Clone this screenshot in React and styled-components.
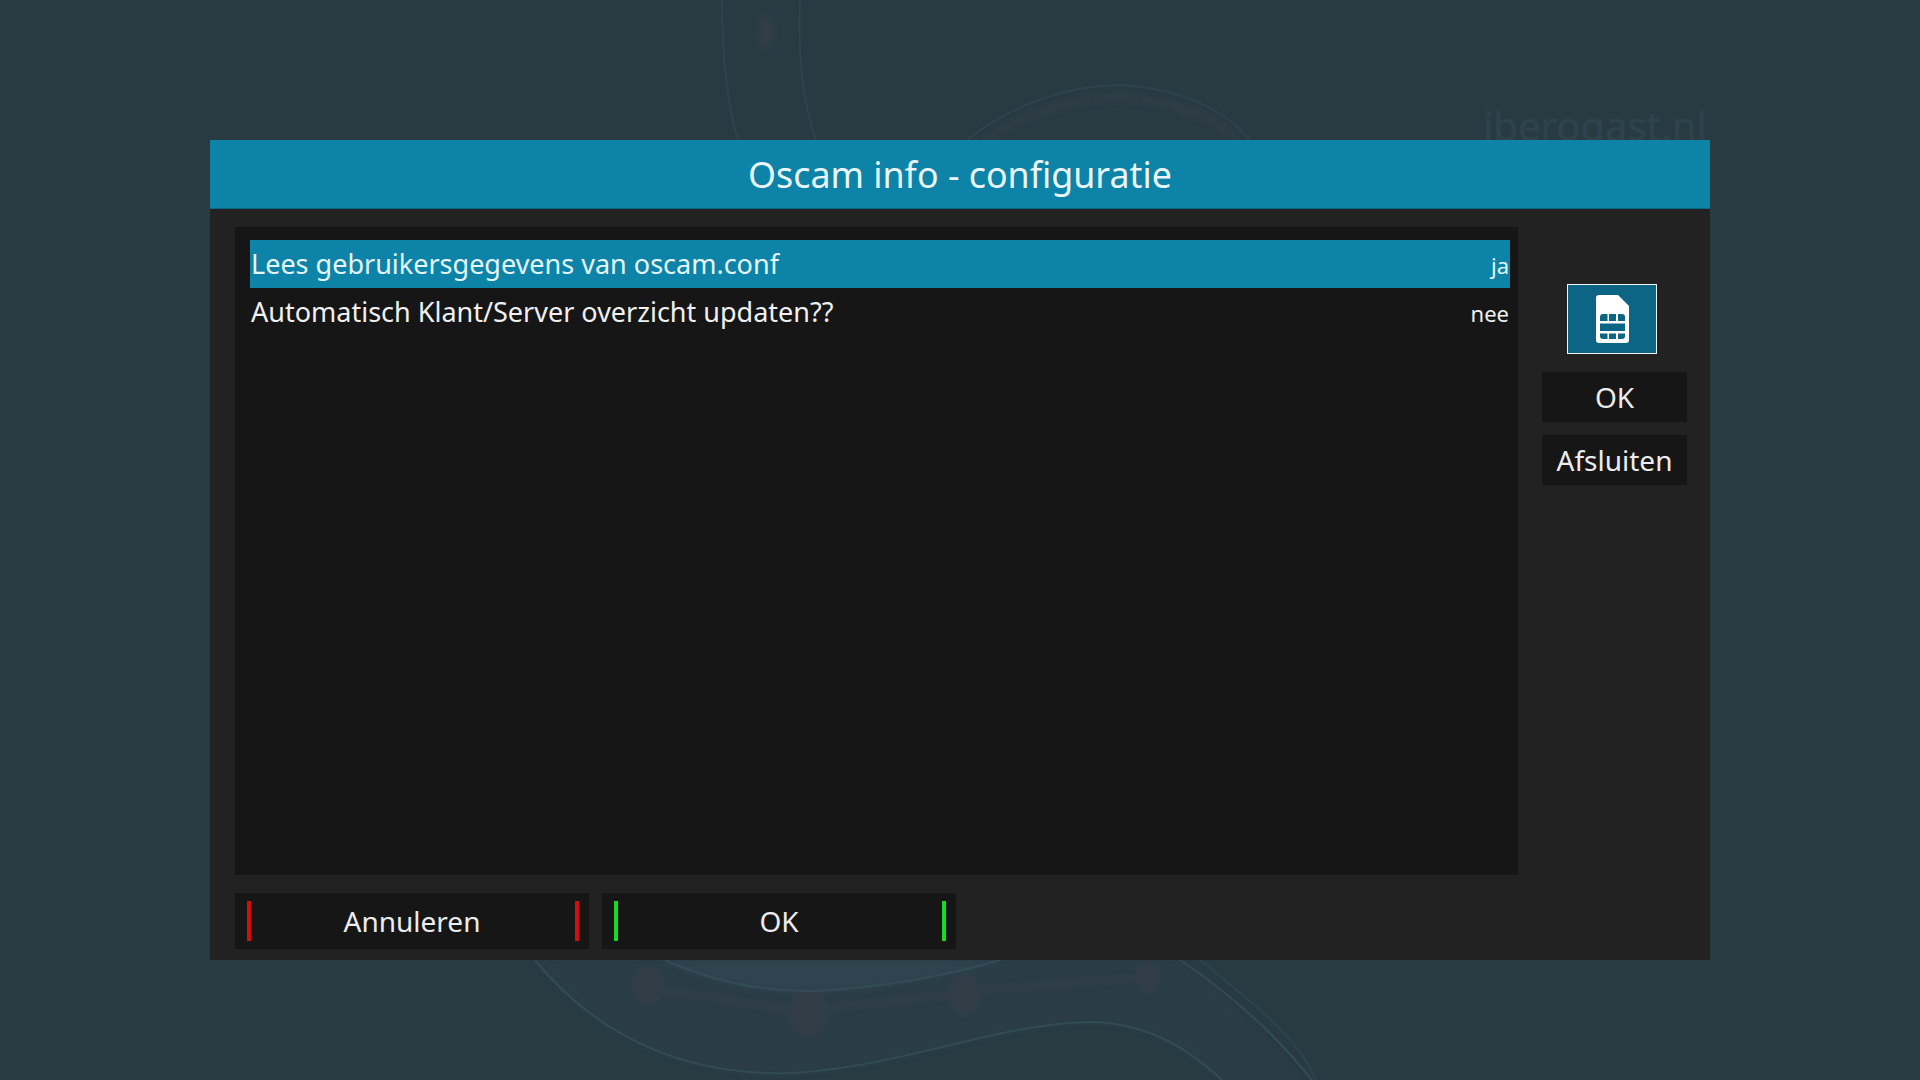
import React from "react";
import styled, { createGlobalStyle } from "styled-components";

const GlobalStyle = createGlobalStyle`
  html, body {
    margin: 0;
    padding: 0;
    background: #283b43;
    font-family: "Noto Sans", "Open Sans", sans-serif;
    overflow: hidden;
  }
`;

const Screen = styled.div`
  position: relative;
  width: 1920px;
  height: 1080px;
  box-sizing: border-box;
  padding-top: 140px;
  display: flex;
  justify-content: center;
  align-items: flex-start;
  background: #283b43;
  overflow: hidden;
`;

const Backdrop = styled.svg`
  position: absolute;
  inset: 0;
  width: 1920px;
  height: 1080px;
`;

const Watermark = styled.div`
  position: absolute;
  left: 1483px;
  top: 99px;
  font-size: 40px;
  line-height: 54px;
  -webkit-text-stroke: 0.6px #2f434c;
  color: #2f434c;
  white-space: nowrap;
`;

const Dialog = styled.div`
  position: relative;
  width: 1500px;
  height: 820px;
  display: flex;
  flex-direction: column;
  background: #222222;
`;

const Header = styled.div`
  height: 69px;
  flex: none;
  box-sizing: border-box;
  display: flex;
  align-items: center;
  justify-content: center;
  background: #0d83a8;
  border-bottom: 1px solid #0b6a88;
  color: #eaf6fa;
  font-size: 35.8px;
`;

const Body = styled.div`
  flex: 1;
  display: flex;
  flex-direction: column;
  padding: 18px 23px 12px 25px;
`;

const Main = styled.div`
  display: flex;
  gap: 24px;
  height: 648px;
`;

const List = styled.div`
  width: 1283px;
  box-sizing: border-box;
  padding: 13px 8px 0 15px;
  background: #161616;
`;

const Row = styled.div`
  height: 48px;
  box-sizing: border-box;
  padding: 0 1px 2px 1px;
  display: flex;
  align-items: center;
  justify-content: space-between;
  background: ${(p) => (p.$selected ? "#0d83a8" : "transparent")};
  color: ${(p) => (p.$selected ? "#e4f6fb" : "#f0f0f0")};
  font-size: 27px;
`;

const RowValue = styled.span`
  font-size: 22px;
  padding-top: 3px;
`;

const Side = styled.div`
  width: 145px;
  padding-top: 57px;
  display: flex;
  flex-direction: column;
`;

const IconBox = styled.div`
  width: 90px;
  height: 70px;
  box-sizing: border-box;
  margin: 0 0 18px 25px;
  display: flex;
  align-items: center;
  justify-content: center;
  background: #0d6585;
  border: 1px solid #f4f4f4;
`;

const SideButton = styled.div`
  height: 50px;
  margin-bottom: 13px;
  display: flex;
  align-items: center;
  justify-content: center;
  background: #161616;
  color: #ececec;
  font-size: 28px;
`;

const Footer = styled.div`
  display: flex;
  gap: 13px;
  margin-top: 18px;
`;

const ColorButton = styled.div`
  width: 354px;
  height: 56px;
  box-sizing: border-box;
  padding: 0 10px 0 12px;
  display: flex;
  align-items: center;
  justify-content: space-between;
  background: #161616;
  color: #ececec;
  font-size: 28px;
`;

const ButtonLabel = styled.span`
  margin-right: 2px;
`;

const Mark = styled.span`
  width: 4px;
  height: 40px;
  flex: none;
  background: ${(p) => p.$color};
`;

const SimIcon = () => (
  <svg width="33" height="48" viewBox="0 0 33 48">
    <path d="M3 0H22L33 11V45a3 3 0 0 1-3 3H3a3 3 0 0 1-3-3V3a3 3 0 0 1 3-3Z" fill="#fff" />
    <g fill="#0d6585">
      <path d="M4 26V22a3 3 0 0 1 3-3h4.5v7Z" />
      <rect x="13" y="19" width="7" height="7" />
      <path d="M22 19h4a3 3 0 0 1 3 3v4h-7Z" />
      <rect x="4" y="28.5" width="25" height="7.5" />
      <path d="M4 38.5h7.5V44H7a3 3 0 0 1-3-3Z" />
      <rect x="13" y="38.5" width="7" height="5.5" />
      <path d="M22 38.5h7V41a3 3 0 0 1-3 3h-4Z" />
    </g>
  </svg>
);

const Swirls = () => (
  <Backdrop viewBox="0 0 1920 1080">
    <defs>
      <filter id="soft">
        <feGaussianBlur stdDeviation="3" />
      </filter>
    </defs>
    <g filter="url(#soft)">
      <path d="M535 960C600 1040 690 1076 790 1073C900 1068 1000 1022 1094 1022C1150 1024 1190 1050 1222 1080H1300C1270 1040 1230 1000 1180 960H1000C950 975 880 988 815 991C770 992 720 985 665 960Z" fill="#2b3e47" />
      <path d="M665 960C720 985 770 992 815 991C880 988 950 975 1000 960Z" fill="#2e444f" />
      <g fill="#313e46">
        <ellipse cx="648" cy="985" rx="14" ry="20" />
        <ellipse cx="808" cy="1013" rx="18" ry="24" />
        <ellipse cx="965" cy="995" rx="15" ry="20" />
        <ellipse cx="1148" cy="977" rx="10" ry="17" />
        <ellipse cx="766" cy="32" rx="8" ry="18" />
      </g>
      <path d="M662 990L790 1010M826 1008L950 995M980 990L1135 978" fill="none" stroke="#303e46" strokeWidth="5" />
      <path d="M985 140C1030 112 1075 97 1120 97C1170 100 1210 115 1238 140" fill="none" stroke="#333e46" strokeWidth="6" />
    </g>
    <g fill="none" stroke="#35505b" strokeWidth="2" opacity="0.8">
      <path d="M535 960C600 1040 690 1076 790 1073C900 1068 1000 1022 1094 1022C1150 1024 1190 1050 1222 1080" />
      <path d="M665 960C720 985 770 992 815 991C880 988 950 975 1000 960" />
      <path d="M1180 960C1240 1000 1280 1040 1312 1080" />
      <path d="M1200 960C1250 1000 1300 1040 1316 1080" opacity="0.5" />
    </g>
    <g fill="none" stroke="#2e434d" strokeWidth="2">
      <path d="M967 140C1010 105 1070 85 1120 85C1180 88 1225 110 1250 140" />
      <path d="M722 0C722 50 726 100 738 140" />
      <path d="M800 0C798 50 802 100 816 140" />
    </g>
  </Backdrop>
);

export default function App() {
  return (
    <Screen>
      <GlobalStyle />
      <Swirls />
      <Watermark>iberogast.nl</Watermark>
      <Dialog>
        <Header>Oscam info - configuratie</Header>
        <Body>
          <Main>
            <List>
              <Row $selected>
                <span>Lees gebruikersgegevens van oscam.conf</span>
                <RowValue>ja</RowValue>
              </Row>
              <Row>
                <span>Automatisch Klant/Server overzicht updaten??</span>
                <RowValue>nee</RowValue>
              </Row>
            </List>
            <Side>
              <IconBox>
                <SimIcon />
              </IconBox>
              <SideButton>OK</SideButton>
              <SideButton>Afsluiten</SideButton>
            </Side>
          </Main>
          <Footer>
            <ColorButton>
              <Mark $color="#d01010" />
              <ButtonLabel>Annuleren</ButtonLabel>
              <Mark $color="#d01010" />
            </ColorButton>
            <ColorButton>
              <Mark $color="#10e020" />
              <ButtonLabel>OK</ButtonLabel>
              <Mark $color="#10e020" />
            </ColorButton>
          </Footer>
        </Body>
      </Dialog>
    </Screen>
  );
}
